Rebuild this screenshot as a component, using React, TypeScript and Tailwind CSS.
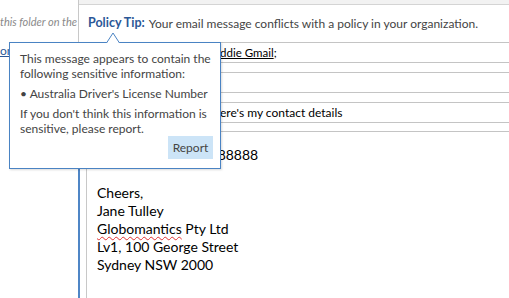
const uiFont = { fontFamily: 'Lato, "Open Sans", sans-serif' }

function PolicyPopup() {
  return (
    <div
      className="absolute left-[9px] top-[42px] h-[127px] w-[212px] border border-[#4a83c3] bg-white pl-[10px] pr-[7px] pt-[8px] text-[12px] leading-[15px] text-[#444] shadow-[1px_1px_2px_rgba(0,0,0,0.15)]"
      style={uiFont}
    >
      <svg
        className="absolute left-[96px] top-[-11px]"
        width="14"
        height="12"
        viewBox="0 0 14 12"
      >
        <polygon points="0.5,11 7,1 13.5,11" fill="#fff" />
        <polyline points="0.5,11 7,1 13.5,11" fill="none" stroke="#4a83c3" strokeWidth="1" />
      </svg>
      <p className="whitespace-nowrap">This message appears to contain the</p>
      <p className="whitespace-nowrap">following sensitive information:</p>
      <p className="mt-[5px] whitespace-nowrap">• Australia Driver's License Number</p>
      <p className="mt-[5px] whitespace-nowrap">If you don't think this information is</p>
      <p className="whitespace-nowrap">sensitive, please report.</p>
      <div className="flex justify-end">
        <button className="h-[23px] w-[45px] bg-[#cce4f7] text-[12px] text-[#444]">
          Report
        </button>
      </div>
    </div>
  )
}

function HeaderField({ children }: { children?: React.ReactNode }) {
  return (
    <div className="flex h-[21px] items-center whitespace-nowrap border-y border-[#c4c4c4] text-[12px] text-black">
      {children}
    </div>
  )
}

const App = () => {
  return (
    <div className="relative flex h-[298px] w-[509px] overflow-hidden bg-white">
      <aside className="w-[78px] shrink-0 overflow-hidden" style={uiFont}>
        <p className="mt-[14px] whitespace-nowrap text-[11px] italic text-[#8a8a8a]">
          this folder on the
        </p>
        <p className="mt-[11px] whitespace-nowrap text-[12px] text-[#2b5797] underline">
          on
        </p>
      </aside>

      <main className="flex min-w-0 flex-1 flex-col border-l border-[#c8c8c8]">
        <div className="h-[5px] border-b border-[#d4d4d4] bg-[#f2f2f2]" />
        <div
          className="flex h-[37px] items-center whitespace-nowrap pl-[9px] text-[12px] text-[#444]"
          style={uiFont}
        >
          <span className="text-[12.5px] font-bold text-[#2b5797]">Policy Tip:</span>
          <span className="ml-[4px]">
            Your email message conflicts with a policy in your organization.
          </span>
        </div>

        <div className="flex flex-col gap-[9px]" style={uiFont}>
          <HeaderField>
            <span className="pl-[125px] text-[11.5px]">
              <span className="underline">Freddie Gmail</span>;
            </span>
          </HeaderField>
          <HeaderField />
          <HeaderField>
            <span className="pl-[132px]">Here's my contact details</span>
          </HeaderField>
        </div>

        <div className="-ml-px mt-[8px] flex flex-1 border-l-2 border-t border-l-[#4f86c6] border-t-[#c4c4c4]">
          <div
            className="ml-[6px] flex-1 border-l border-[#c8c8c8] pl-[10px] pt-[14px] text-[14px] leading-[18px] text-black"
            style={{ fontFamily: 'Lato, "Liberation Sans", sans-serif' }}
          >
            <p className="whitespace-nowrap">Licence number: 8888888</p>
            <div className="mt-[20px]">
              <p>Cheers,</p>
              <p>Jane Tulley</p>
              <p>
                <span className="underline decoration-[#e03030] decoration-wavy decoration-1 underline-offset-2">
                  Globomantics
                </span>{' '}
                Pty Ltd
              </p>
              <p>Lv1, 100 George Street</p>
              <p>Sydney NSW 2000</p>
            </div>
          </div>
        </div>
      </main>

      <PolicyPopup />
    </div>
  )
}

export default App
